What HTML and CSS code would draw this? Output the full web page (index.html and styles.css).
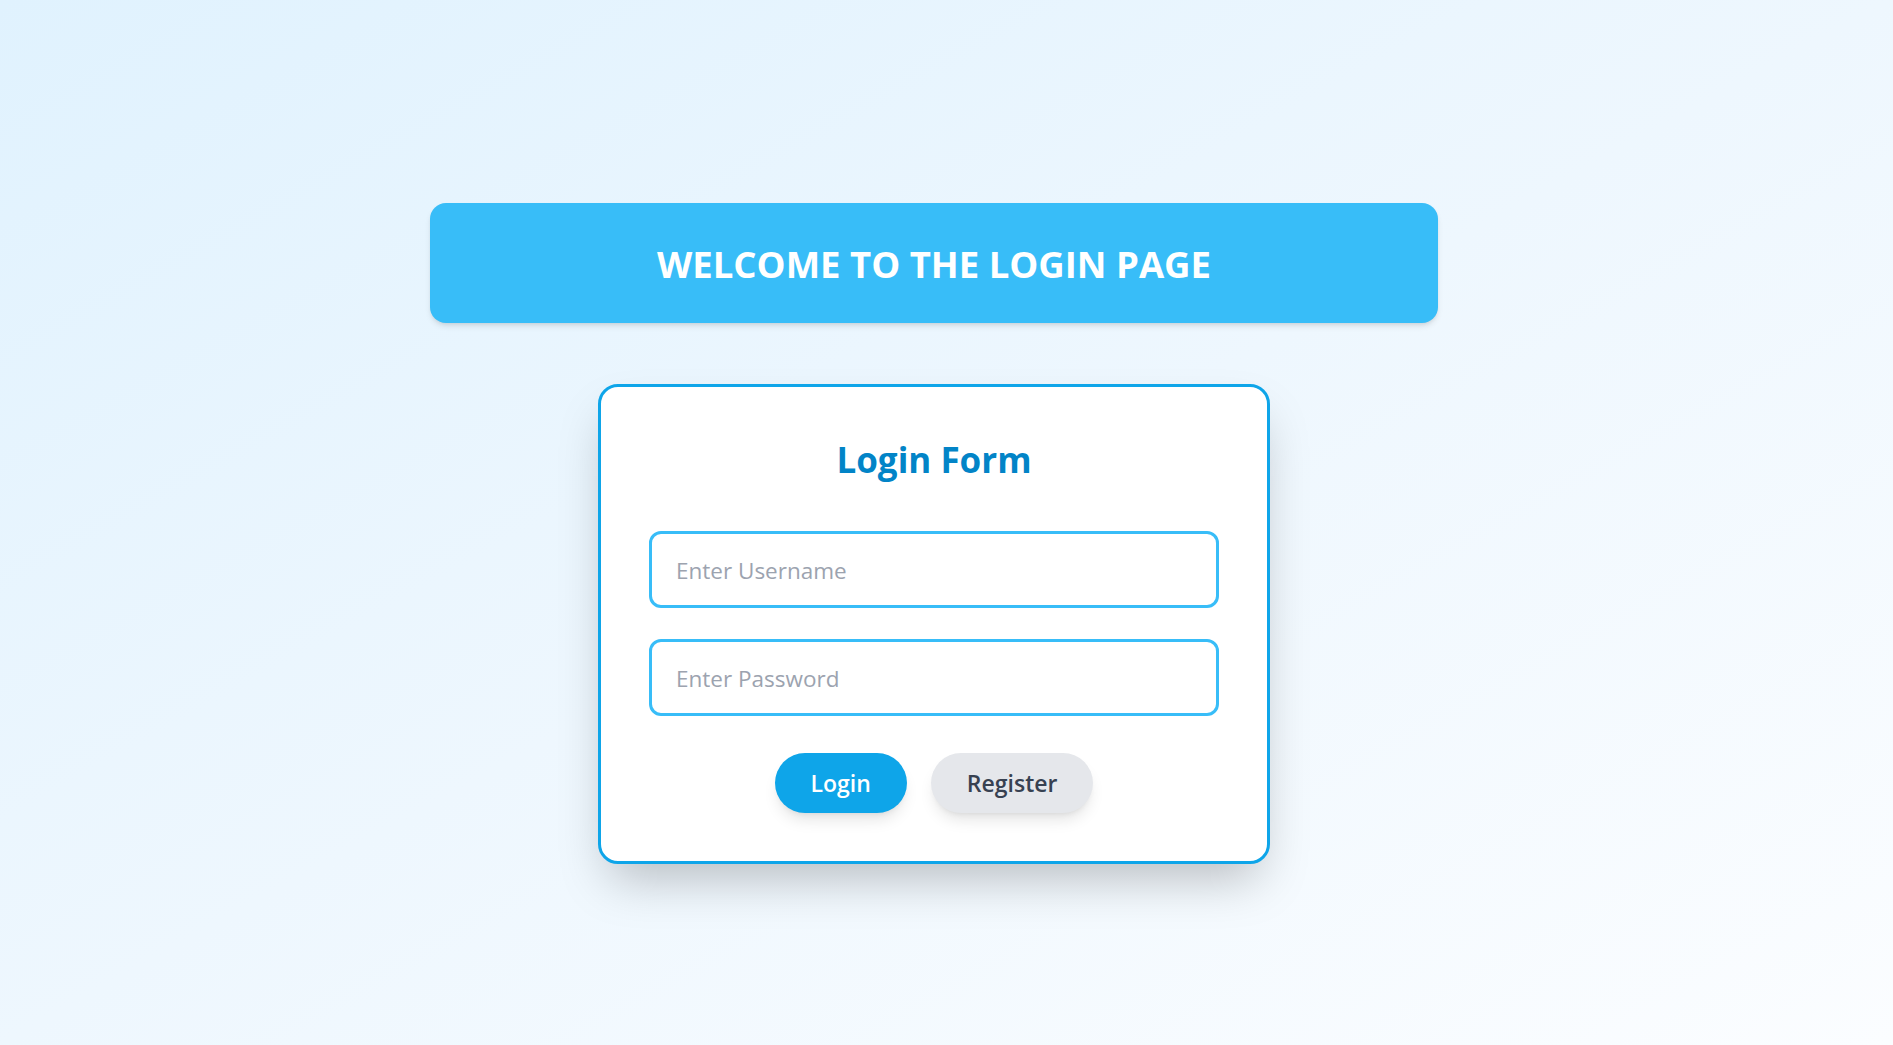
FILE: index.html
```html
<!DOCTYPE html>
<html lang="en">
<head>
<meta charset="utf-8">
<title>Login Page</title>
<link rel="stylesheet" href="styles.css">
</head>
<body>
<main class="page">
  <header class="banner">
    <h1 class="banner-title">WELCOME TO THE LOGIN PAGE</h1>
  </header>
  <section class="card">
    <h2 class="card-title">Login Form</h2>
    <form class="form">
      <input class="field" type="text" placeholder="Enter Username">
      <input class="field" type="password" placeholder="Enter Password">
      <div class="actions">
        <button type="button" class="btn btn-primary">Login</button>
        <button type="button" class="btn btn-secondary">Register</button>
      </div>
    </form>
  </section>
</main>
</body>
</html>
```
FILE: styles.css
```css
* { box-sizing: border-box; }
html, body { margin: 0; height: 100%; }
body {
  font-family: "Open Sans", "Noto Sans", sans-serif;
  background: linear-gradient(to bottom right, #e0f2fe 0%, #eef7fe 50%, #fbfdff 100%);
  min-height: 1045px;
}
.page {
  display: flex;
  flex-direction: column;
  align-items: center;
  padding: 203px 25px 0 0;
  gap: 61px;
}
.banner {
  width: 1008px;
  height: 120px;
  background: #38bdf8;
  border-radius: 16px;
  box-shadow: 0 4px 6px -1px rgba(0,0,0,0.1), 0 2px 4px -2px rgba(0,0,0,0.1);
  display: flex;
  align-items: center;
  justify-content: center;
  padding-top: 2px;
}
.banner-title {
  margin: 0;
  color: #ffffff;
  font-size: 36.5px;
  font-weight: 700;
  letter-spacing: 0;
}
.card {
  width: 672px;
  background: #ffffff;
  border: 3px solid #0ea5e9;
  border-radius: 20px;
  padding: 48px;
  box-shadow: 0 25px 50px -12px rgba(0,0,0,0.25);
}
.card-title {
  margin: 0 0 47px;
  padding-top: 1px;
  text-align: center;
  color: #0284c7;
  font-size: 35px;
  font-weight: 700;
  line-height: 48px;
}
.form {
  display: flex;
  flex-direction: column;
}
.field {
  height: 77px;
  width: 100%;
  border: 3px solid #38bdf8;
  border-radius: 12px;
  padding: 2px 24px 0;
  font-family: inherit;
  font-size: 22.5px;
  color: #111827;
  background: #fff;
  outline: none;
  margin-bottom: 31px;
}
.field::placeholder { color: #9ca3af; }
.actions {
  display: flex;
  justify-content: center;
  gap: 24px;
  margin-top: 6px;
}
.btn {
  height: 60px;
  border: none;
  border-radius: 9999px;
  padding: 0 36px;
  font-family: inherit;
  font-size: 23px;
  font-weight: 600;
  box-shadow: 0 10px 15px -3px rgba(0,0,0,0.1), 0 4px 6px -4px rgba(0,0,0,0.1);
  cursor: pointer;
}
.btn-primary { background: #0ea5e9; color: #ffffff; }
.btn-secondary { background: #e5e7eb; color: #374151; }
```
